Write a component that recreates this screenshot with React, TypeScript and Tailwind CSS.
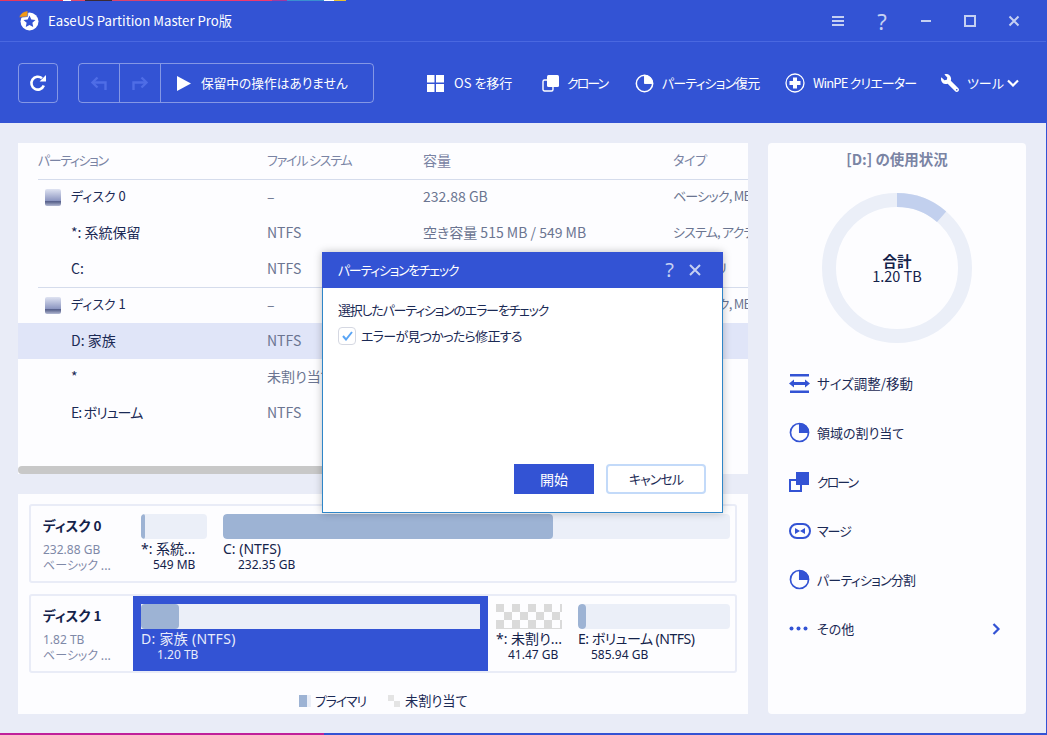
import React from "react";
import { FaWrench } from "react-icons/fa";

const JP = `font-['Noto_Sans_CJK_JP',sans-serif] [font-feature-settings:'palt']`;

function Pie({ size = 20, color = "#fff" }: { size?: number; color?: string }) {
  return (
    <svg width={size} height={size} viewBox="0 0 20 20" fill="none">
      <circle cx="10" cy="10" r="8.6" stroke={color} strokeWidth="1.6" />
      <path d="M10 1.4A8.6 8.6 0 0 1 18.6 10H10Z" fill={color} stroke={color} strokeWidth="1" />
    </svg>
  );
}

function DiskIcon() {
  return (
    <svg width="16" height="17" viewBox="0 0 16 17">
      <defs>
        <linearGradient id="dg" x1="0" y1="0" x2="0" y2="1">
          <stop offset="0" stopColor="#dfe3f2" />
          <stop offset="0.7" stopColor="#8b95c0" />
          <stop offset="0.72" stopColor="#565f8c" />
          <stop offset="0.8" stopColor="#6a7399" />
          <stop offset="1" stopColor="#b4bad4" />
        </linearGradient>
      </defs>
      <rect width="16" height="17" rx="2" fill="url(#dg)" />
    </svg>
  );
}

const rows = [
  { name: "ディスク 0", nc: "text-[13px]", fs: "–", cap: "232.88 GB", type: "ベーシック, MBR", disk: true },
  { name: "*: 系統保留", nc: "text-[14px]", fs: "NTFS", cap: "空き容量 515 MB / 549 MB", type: "システム, アクティブ" },
  { name: "C:", nc: "text-[14px]", fs: "NTFS", cap: "", type: "プライマリ" },
  { name: "ディスク 1", nc: "text-[13px]", fs: "–", cap: "", type: "ベーシック, MBR", disk: true },
  { name: "D: 家族", nc: "text-[14px]", fs: "NTFS", cap: "", type: "", sel: true },
  { name: "*", nc: "text-[14px]", fs: "未割り当て", cap: "", type: "" },
  { name: "E: ボリューム", nc: "text-[14px] tracking-[-0.9px]", fs: "NTFS", cap: "", type: "" },
];

function ToolItem({ icon, label, w, tc }: { icon: React.ReactNode; label: string; w: string; tc: string }) {
  return (
    <div className={`flex shrink-0 items-center gap-2 ${w}`}>
      {icon}
      <span className={`whitespace-nowrap text-[13px] text-white ${tc}`}>{label}</span>
    </div>
  );
}

function Bar({ w, fill, sel }: { w: string; fill: string; sel?: boolean }) {
  return (
    <div className={`h-[25px] ${w} ${sel ? "" : "rounded-sm"} overflow-hidden bg-[#ebeff8]`}>
      <div className={`h-full ${fill} rounded-sm bg-[#9db3d4]`} />
    </div>
  );
}

function Part({ label, size, sizePad, lc = "" }: { label: string; size: string; sizePad: string; lc?: string }) {
  return (
    <div className="mt-[2px] whitespace-nowrap font-['Noto_Sans','Noto_Sans_CJK_JP',sans-serif] text-[14px] leading-[16px] text-[#14224a]">
      <div className={`h-[16px] ${lc}`}>{label}</div>
      <div className={`${sizePad} text-[12px]`}>{size}</div>
    </div>
  );
}

function Action({ icon, label, lc, extra }: { icon: React.ReactNode; label: string; lc: string; extra?: React.ReactNode }) {
  return (
    <div className="flex h-[49px] items-center">
      <div className="flex w-[28px] justify-start">{icon}</div>
      <span className={`w-[155px] whitespace-nowrap text-[#1b2a55] ${lc}`}>{label}</span>
      {extra}
    </div>
  );
}

const B = "#3353d4";

export default function App() {
  return (
    <div className={`relative h-[735px] w-[1047px] overflow-hidden bg-[#e9ecf7] ${JP}`}>
      {/* desktop sliver on top */}
      <div className="flex h-px">
        <div className="w-[63px] bg-[#e8385c]" />
        <div className="w-[8px] bg-white" />
        <div className="w-[14px] bg-[#e0486a]" />
        <div className="w-[27px] bg-[#3a2a35]" />
        <div className="w-[40px] bg-[#d9436d]" />
        <div className="w-[120px] bg-[#f0386e]" />
        <div className="w-[15px] bg-[#a03aa0]" />
        <div className="w-[37px] bg-[#3a8fd0]" />
        <div className="w-[10px] bg-white" />
        <div className="w-[12px] bg-[#e8c030]" />
        <div className="flex-1 bg-[#3353d4]" />
      </div>

      {/* title bar */}
      <div className="flex h-[41px] items-center border-b border-[#4a68e0] bg-[#3353d4] pl-[19px]">
        <svg width="20" height="20" viewBox="0 0 20 20">
          <circle cx="10.500" cy="10.500" r="9" fill="#fff" />
          <path d="M0 6.500C1.500 2.500 4.500 0 9 0L8.500 5.500C6 5.500 3 6.500 0 6.500Z" fill="#f29a16" stroke="#3353d4" strokeWidth="0.6" />
          <path d="M10.500 4.500l1.800 3.900 4.200.5-3.100 2.900.8 4.200-3.700-2.100-3.700 2.100.8-4.200-3.100-2.900 4.200-.5Z" fill="#3353d4" />
        </svg>
        <span className="ml-[9px] whitespace-nowrap text-[13.2px] text-white">EaseUS Partition Master Pro版</span>
        <div className="ml-auto mr-[11px] flex items-center">
          <div className="flex w-[44px] justify-center">
            <svg width="12" height="12" viewBox="0 0 12 12" fill="#c5d0f2"><rect y="1" width="12" height="2" /><rect y="5" width="12" height="2" /><rect y="9" width="12" height="2" /></svg>
          </div>
          <div className="flex w-[44px] justify-center font-['Noto_Sans',sans-serif] text-[22px] leading-none text-[#c5d0f2]">?</div>
          <div className="flex w-[44px] justify-center">
            <svg width="12" height="12" viewBox="0 0 12 12" fill="#c5d0f2"><rect x="1" y="5" width="10" height="2" /></svg>
          </div>
          <div className="flex w-[44px] justify-center">
            <svg width="12" height="12" viewBox="0 0 12 12" fill="none" stroke="#c5d0f2" strokeWidth="2"><rect x="1" y="1" width="10" height="10" /></svg>
          </div>
          <div className="flex w-[44px] justify-center">
            <svg width="12" height="12" viewBox="0 0 12 12" fill="none" stroke="#c5d0f2" strokeWidth="2"><path d="M1.500 1.500l9 9M10.500 1.500l-9 9" /></svg>
          </div>
        </div>
      </div>

      {/* toolbar */}
      <div className="flex h-[81px] items-center bg-[#3353d4] pl-[18px] pt-px">
        <div className="flex h-10 w-10 items-center justify-center rounded-sm border border-white/40">
          <svg width="18" height="18" viewBox="0 0 18 18" fill="none">
            <path d="M14.800 11.500A6.400 6.400 0 1 1 13 4.300" stroke="#fff" strokeWidth="2.600" />
            <path d="M10.600 7.500H17V1Z" fill="#fff" />
          </svg>
        </div>
        <div className="ml-5 flex h-10 w-[296px] items-center rounded-sm border border-white/40">
          <div className="flex h-full w-[41px] items-center justify-center border-r border-white/40">
            <svg width="18" height="16" viewBox="0 0 18 16" fill="none" stroke="#4f6de6" strokeWidth="2.400"><path d="M15.500 15V7.500H3" /><path d="M7.500 2.500 2.500 7.500l5 5" /></svg>
          </div>
          <div className="flex h-full w-[41px] items-center justify-center border-r border-white/40">
            <svg width="18" height="16" viewBox="0 0 18 16" fill="none" stroke="#4f6de6" strokeWidth="2.400"><path d="M2.500 15V7.500H15" /><path d="M10.500 2.500l5 5-5 5" /></svg>
          </div>
          <svg className="ml-[16px]" width="14" height="15" viewBox="0 0 14 15" fill="#fff"><path d="M0 0l14 7.500L0 15Z" /></svg>
          <span className="ml-[10px] whitespace-nowrap text-[12.7px] text-white">保留中の操作はありません</span>
        </div>
        <div className="ml-[53px] flex items-center">
          <ToolItem
            w="w-[115px]"
            tc=""
            label="OS を移行"
            icon={<svg className="mr-[2px]" width="17" height="17" viewBox="0 0 17 17" fill="#fff"><rect width="7.500" height="7.500" /><rect x="9" width="8" height="7.500" /><rect y="9" width="7.500" height="8" /><rect x="9" y="9" width="8" height="8" /></svg>}
          />
          <ToolItem
            w="w-[93px]"
            tc="tracking-[-2px]"
            label="クローン"
            icon={<svg width="17" height="18" viewBox="0 0 17 18"><rect x="1" y="6" width="10" height="11" rx="1.500" fill="none" stroke="#fff" strokeWidth="1.400" /><rect x="5" y="1" width="12" height="12" rx="1.500" fill="#fff" /></svg>}
          />
          <ToolItem w="w-[150px]" tc="tracking-[-0.9px]" label="パーティション復元" icon={<Pie size={19} />} />
          <ToolItem
            w="w-[156px]"
            tc="tracking-[-0.85px]"
            label="WinPE クリエーター"
            icon={<svg width="20" height="20" viewBox="0 0 20 20"><circle cx="10" cy="10" r="9" fill="none" stroke="#fff" strokeWidth="1.300" /><path d="M8 4.500h4V8h3.500v4H12v3.500H8V12H4.500V8H8Z" fill="#fff" /></svg>}
          />
          <ToolItem w="" tc="" label="ツール" icon={<FaWrench className="-scale-x-100 text-white" size={18} />} />
          <svg className="ml-[3px]" width="12" height="8" viewBox="0 0 12 8" fill="none" stroke="#fff" strokeWidth="2.200"><path d="M1 1.500l5 5 5-5" /></svg>
        </div>
      </div>

      {/* main */}
      <div className="flex pl-[18px] pt-5">
        <div className="flex w-[730px] flex-col">
          {/* table */}
          <div className="h-[331px] overflow-hidden bg-[#fdfdff]">
            <div className="relative h-[323px] pl-5">
              <div className="-mb-px flex h-[37px] items-center border-b border-[#d5dcec] pb-[2px] text-[13px] text-[#7a84a4]">
                <div className="w-[229px] shrink-0 tracking-[-1.4px]">パーティション</div>
                <div className="w-[156px] shrink-0 tracking-[-1.2px]">ファイル システム</div>
                <div className="w-[250px] shrink-0 text-[14px]">容量</div>
                <div className="whitespace-nowrap tracking-[-0.3px]">タイプ</div>
              </div>
              {rows.map((r, i) => (
                <div
                  key={i}
                  className={`-ml-5 flex h-9 items-center pb-[2px] pl-5 text-[14px] ${r.sel ? "bg-[#e0e5f8]" : ""}`}
                >
                  <div className={`flex w-[229px] shrink-0 items-center text-[#1b2a55] ${r.nc}`}>
                    {r.disk ? (
                      <>
                        <div className="ml-[7px] mr-[10px] mt-[2px] flex"><DiskIcon /></div>
                        {r.name}
                      </>
                    ) : (
                      <span className="ml-[33px]">{r.name}</span>
                    )}
                  </div>
                  <div className="w-[156px] shrink-0 text-[#6b7591]">{r.fs}</div>
                  <div className="w-[250px] shrink-0 whitespace-nowrap text-[#6b7591]">{r.cap}</div>
                  <div className="whitespace-nowrap text-[13px] tracking-[-0.8px] text-[#6b7591]">{r.type}</div>
                </div>
              ))}
              <div className="absolute left-5 right-0 top-[144px] h-px bg-[#d5dcec]" />
            </div>
            <div className="h-[8px] w-[400px] rounded-sm bg-[#c8c8c8]" />
          </div>

          {/* disk map */}
          <div className="mt-[20px] h-[220px] bg-[#fdfdff] px-[11px] pt-[10px]">
            <div className="flex h-[79px] rounded-[3px] border-2 border-[#e9ecf7] pl-[12px] pt-[8px]">
              <div className="w-[98px] pt-[1px]">
                <div className="text-[13.5px] font-bold leading-[20px] text-[#14224a]">ディスク 0</div>
                <div className="mt-[7px] font-['Noto_Sans','Noto_Sans_CJK_JP',sans-serif] text-[12px] leading-[15px] text-[#7f89a8]">232.88 GB</div>
                <div className="text-[12px] leading-[15px] text-[#7f89a8]">ベーシック ...</div>
              </div>
              <div className="w-[82px]">
                <Bar w="w-[66px]" fill="w-[4px]" />
                <Part label="*: 系統..." size="549 MB" sizePad="pl-[12px]" />
              </div>
              <div className="w-[507px]">
                <Bar w="w-[507px]" fill="w-[330px]" />
                <Part label="C: (NTFS)" size="232.35 GB" sizePad="pl-[15px]" />
              </div>
            </div>
            <div className="mt-[11px] flex h-[79px] rounded-[3px] border-2 border-[#e9ecf7] pl-[12px]">
              <div className="w-[90px] pt-[9px]">
                <div className="text-[13.5px] font-bold leading-[20px] text-[#14224a]">ディスク 1</div>
                <div className="mt-[7px] font-['Noto_Sans','Noto_Sans_CJK_JP',sans-serif] text-[12px] leading-[15px] text-[#7f89a8]">1.82 TB</div>
                <div className="text-[12px] leading-[15px] text-[#7f89a8]">ベーシック ...</div>
              </div>
              <div className="h-[75px] w-[355px] bg-[#3353d4] px-2 pt-[8px] [&_*]:text-[#e8ecfb]">
                <Bar w="w-[339px]" fill="w-[38px]" sel />
                <Part label="D: 家族 (NTFS)" size="1.20 TB" sizePad="pl-[16px]" lc="tracking-[0.3px]" />
              </div>
              <div className="w-[90px] pl-2 pt-[8px]">
                <div className="h-[25px] w-[66px] border-b border-[#dadada] bg-[conic-gradient(#fdfdff_25%,#dadada_0_50%,#fdfdff_0_75%,#dadada_0)] bg-[length:16px_16px]" />
                <Part label="*: 未割り..." size="41.47 GB" sizePad="pl-[12px]" />
              </div>
              <div className="w-[152px] pt-[8px]">
                <Bar w="w-[152px]" fill="w-[8px]" />
                <Part label="E: ボリューム (NTFS)" size="585.94 GB" sizePad="pl-[13px]" lc="tracking-[-0.5px]" />
              </div>
            </div>
            <div className="mt-[20px] flex items-center pl-[270px] leading-[16px] text-[#1b2a55]">
              <div className="flex h-[12px] w-[12px]">
                <div className="w-[8px] bg-[#9db3d4]" />
                <div className="w-[4px] bg-[#ebeff8]" />
              </div>
              <span className="ml-[4px] w-[73px] whitespace-nowrap text-[13px] tracking-[-1.2px]">プライマリ</span>
              <div className="grid h-[12px] w-[12px] grid-cols-2">
                <div className="bg-[#e4e4e4]" />
                <div />
                <div />
                <div className="bg-[#e4e4e4]" />
              </div>
              <span className="ml-[5px] text-[13.2px]">未割り当て</span>
            </div>
          </div>
        </div>

        {/* right panel */}
        <div className="ml-5 h-[571px] w-[258px] rounded-sm bg-[#fdfdff]">
          <div className="pt-[6px] text-center text-[14.5px] font-bold leading-[20px] text-[#7a84a4]">[D:] の使用状況</div>
          <div className="relative mx-auto mt-[24px] h-[150px] w-[150px]">
            <svg width="150" height="150" viewBox="0 0 150 150" fill="none">
              <circle cx="75" cy="75" r="68" stroke="#ebeff8" strokeWidth="14" />
              <path d="M75 7A68 68 0 0 1 119.600 23.700" stroke="#c2d0ee" strokeWidth="14" />
            </svg>
            <div className="absolute inset-0 flex flex-col items-center justify-center text-[#14224a]">
              <div className="h-[15px] text-[14.5px] font-bold leading-[15px]">合計</div>
              <div className="h-[15px] text-[14.5px] leading-[15px]">1.20 TB</div>
            </div>
          </div>
          <div className="mt-[16px] pl-[21px]">
            <Action
              label="サイズ調整/移動"
              lc="text-[13.5px]"
              icon={<svg width="21" height="19" viewBox="0 0 21 19" fill={B}><path d="M1 0h19v2.500H1zM1 16.500h19V19H1zM5 5.500v2.500h11V5.500l5 4-5 4V11H5v2.500l-5-4Z" /></svg>}
            />
            <Action label="領域の割り当て" lc="text-[13px]" icon={<Pie size={21} color={B} />} />
            <Action
              label="クローン"
              lc="text-[13px] tracking-[-2px]"
              icon={<svg width="20" height="20" viewBox="0 0 20 20"><rect x="1" y="8" width="11" height="11" fill="none" stroke={B} strokeWidth="2" /><rect x="7" y="0" width="13" height="13" fill={B} /></svg>}
            />
            <Action
              label="マージ"
              lc="text-[13px] tracking-[-1px]"
              icon={<svg width="22" height="16" viewBox="0 0 22 16" fill="none"><rect x="1" y="1" width="20" height="14" rx="7" stroke={B} strokeWidth="2" /><path d="M6 5l5 3 5-3v6l-5-3-5 3Z" fill={B} /></svg>}
            />
            <Action label="パーティション分割" lc="text-[13px] tracking-[-0.8px]" icon={<Pie size={21} color={B} />} />
            <Action
              label="その他"
              lc="text-[13px]"
              icon={<svg width="19" height="5" viewBox="0 0 19 5" fill={B}><circle cx="2.500" cy="2.500" r="2" /><circle cx="9.500" cy="2.500" r="2" /><circle cx="16.500" cy="2.500" r="2" /></svg>}
              extra={<svg className="ml-[20px]" width="9" height="12" viewBox="0 0 9 12" fill="none" stroke={B} strokeWidth="2.200"><path d="M1.500 1l5 5-5 5" /></svg>}
            />
          </div>
        </div>
      </div>

      {/* dialog */}
      <div className="absolute left-[322px] top-[252px] flex h-[261px] w-[401px] flex-col border border-[#2f86c8] bg-white shadow-[0_0_8px_rgba(0,0,0,0.25)]">
        <div className="-mx-px -mt-px flex h-[36px] items-center bg-[#3353d4] pl-[16px] pr-[22px] text-white">
          <span className="text-[13px] tracking-[-1.3px]">パーティションをチェック</span>
          <span className="ml-auto font-['Noto_Sans',sans-serif] text-[20px] leading-none text-[#c5d0f2]">?</span>
          <svg className="ml-[15px]" width="12" height="12" viewBox="0 0 12 12" fill="none" stroke="#c5d0f2" strokeWidth="2"><path d="M1 1l10 10M11 1 1 11" /></svg>
        </div>
        <div className="flex flex-1 flex-col px-[15px] pt-[12px] text-[13px] text-[#1b2a55]">
          <div className="leading-[20px] tracking-[-1.2px]">選択したパーティションのエラーをチェック</div>
          <div className="mt-[6px] flex items-center leading-[20px]">
            <div className="flex h-[18px] w-[18px] items-center justify-center rounded-sm border border-[#d5d8e2]">
              <svg width="11" height="10" viewBox="0 0 11 10" fill="none" stroke="#5aa5f5" strokeWidth="2"><path d="M1 5l3 3.500L10 1" /></svg>
            </div>
            <span className="ml-[5px] tracking-[-0.7px]">エラーが見つかったら修正する</span>
          </div>
          <div className="mb-[18px] mt-auto flex justify-end gap-3 pr-px">
            <div className="flex h-[30px] w-[80px] items-center justify-center bg-[#3353d4] text-[14px] text-white">開始</div>
            <div className="flex h-[30px] w-[100px] items-center justify-center rounded-sm border-2 border-[#c3daf9] tracking-[-1px]">キャンセル</div>
          </div>
        </div>
      </div>

      {/* desktop sliver below */}
      <div className="absolute bottom-0 left-0 flex h-[2px] w-full">
        <div className="w-[324px] bg-[#c0209a]" />
        <div className="flex-1 bg-[#3353d4]" />
      </div>
      <div className="absolute bottom-0 right-0 top-0 w-px bg-[#3353d4]" />
    </div>
  );
}
